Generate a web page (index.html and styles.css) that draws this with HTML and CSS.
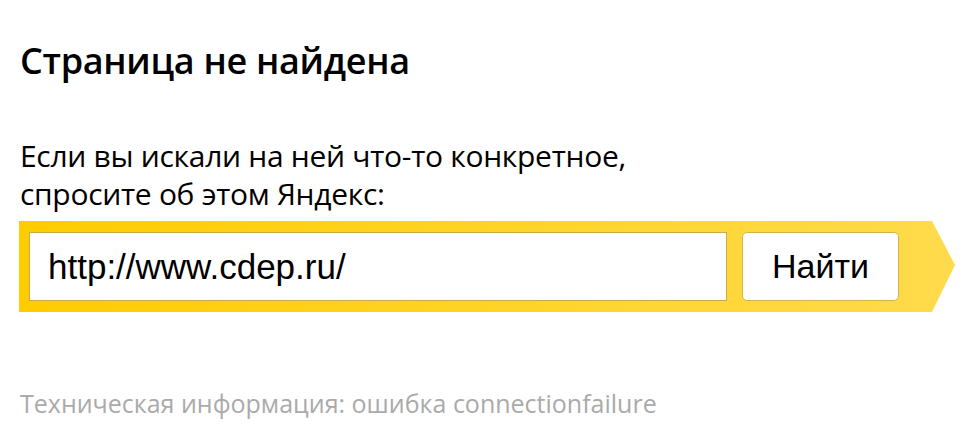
FILE: index.html
```html
<!DOCTYPE html>
<html lang="ru">
<head>
<meta charset="utf-8">
<link rel="stylesheet" href="styles.css">
</head>
<body>
<div class="page">
  <h1 class="title">Страница не найдена</h1>
  <p class="text">Если вы искали на ней что-то конкретное,<br>спросите об этом Яндекс:</p>
  <form class="search">
    <div class="search-input">http://www.cdep.ru/</div>
    <div class="search-button">Найти</div>
  </form>
  <p class="tech">Техническая информация: ошибка connectionfailure</p>
</div>
</body>
</html>
```
FILE: styles.css
```css
html, body {
  margin: 0;
  padding: 0;
  background: #fff;
}
.page {
  padding: 37px 0 0 20px;
  font-family: "Open Sans", "Noto Sans", sans-serif;
  color: #000;
}
.title {
  margin: 0;
  font-size: 36px;
  font-weight: 600;
  line-height: 48px;
  letter-spacing: -0.3px;
}
.text {
  margin: 52px 0 0 0;
  font-size: 30px;
  line-height: 38px;
  letter-spacing: -0.3px;
}
.search {
  margin: 8px 0 0 -1px;
  width: 914px;
  height: 91px;
  display: flex;
  align-items: center;
  gap: 15px;
  padding-left: 10px;
  padding-right: 22px;
  background: linear-gradient(90deg, #ffcc00, #ffdb4d);
  clip-path: polygon(0 0, 913px 0, 936px 44px, 913px 91px, 0 91px);
  box-sizing: content-box;
}
.search-input {
  box-sizing: border-box;
  width: 698px;
  height: 69px;
  background: #fff;
  border: 1px solid #c9a94a;
  display: flex;
  align-items: center;
  padding-left: 18px;
  font-family: "Liberation Sans", Arial, sans-serif;
  font-size: 35px;
}
.search-button {
  box-sizing: border-box;
  width: 157px;
  height: 69px;
  background: #fff;
  border: 1px solid #d2b44e;
  border-radius: 5px;
  display: flex;
  align-items: center;
  justify-content: center;
  font-family: "Liberation Sans", Arial, sans-serif;
  font-size: 34px;
}
.tech {
  margin: 74px 0 0 0;
  font-size: 25px;
  line-height: 34px;
  color: #aaa;
}
```
